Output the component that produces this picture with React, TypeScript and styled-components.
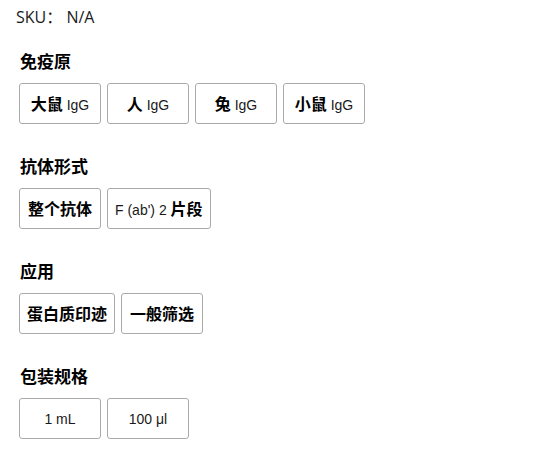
import React from "react";
import styled, { createGlobalStyle } from "styled-components";

const Global = createGlobalStyle`
  html, body { margin: 0; padding: 0; background: #fff; }
  body { font-family: "Liberation Sans", Arial, "Noto Sans CJK SC", sans-serif; color: #111; }
`;

const Page = styled.div`
  padding: 6px 0 0 16px;
  display: flex;
  flex-direction: column;
`;

const Sku = styled.div`
  font-family: "Open Sans", "Noto Sans CJK SC", sans-serif;
  font-size: 16px;
  line-height: 22px;
  color: #1a1a1a;
  margin-bottom: 21px;
`;

const Section = styled.section`
  margin-left: 3px;
  margin-bottom: 30px;
  display: flex;
  flex-direction: column;
  gap: 10px;
`;

const Heading = styled.h3`
  margin: 0 0 0 1px;
  font-family: "Noto Sans CJK SC", sans-serif;
  font-size: 17px;
  font-weight: 700;
  line-height: 24px;
  color: #000;
`;

const Options = styled.div`
  display: flex;
  gap: 6px;
`;

const Option = styled.button`
  box-sizing: border-box;
  min-width: 82px;
  height: 41px;
  padding: 0 7px;
  border: 1px solid #aaa;
  border-radius: 3px;
  background: #fff;
  display: flex;
  align-items: center;
  justify-content: center;
  font-family: "Liberation Sans", Arial, sans-serif;
  font-size: 14px;
  color: #111;
  cursor: pointer;
`;

const Label = styled.span`
  white-space: nowrap;
  line-height: 20px;
`;

const Cjk = styled.span`
  font-family: "Noto Sans CJK SC", sans-serif;
  font-size: 16px;
  font-weight: 700;
  color: #000;
`;

const Latin = styled.span`
  font-family: "Liberation Sans", Arial, sans-serif;
  font-size: 14px;
  color: #1a1a1a;
`;

type Part = { t: string; cjk?: boolean };
const groups: { title: string; opts: Part[][] }[] = [
  {
    title: "免疫原",
    opts: [
      [{ t: "大鼠", cjk: true }, { t: "IgG" }],
      [{ t: "人", cjk: true }, { t: "IgG" }],
      [{ t: "兔", cjk: true }, { t: "IgG" }],
      [{ t: "小鼠", cjk: true }, { t: "IgG" }],
    ],
  },
  {
    title: "抗体形式",
    opts: [
      [{ t: "整个抗体", cjk: true }],
      [{ t: "F (ab') 2" }, { t: "片段", cjk: true }],
    ],
  },
  {
    title: "应用",
    opts: [[{ t: "蛋白质印迹", cjk: true }], [{ t: "一般筛选", cjk: true }]],
  },
  {
    title: "包装规格",
    opts: [[{ t: "1 mL" }], [{ t: "100 μl" }]],
  },
];

export default function App() {
  return (
    <>
      <Global />
      <Page>
        <Sku>SKU： N/A</Sku>
        {groups.map((g) => (
          <Section key={g.title}>
            <Heading>{g.title}</Heading>
            <Options>
              {g.opts.map((parts, i) => (
                <Option key={i}>
                  <Label>
                    {parts.map((p, j) => (
                      <React.Fragment key={j}>
                        {j > 0 ? " " : null}
                        {p.cjk ? <Cjk>{p.t}</Cjk> : <Latin>{p.t}</Latin>}
                      </React.Fragment>
                    ))}
                  </Label>
                </Option>
              ))}
            </Options>
          </Section>
        ))}
      </Page>
    </>
  );
}
